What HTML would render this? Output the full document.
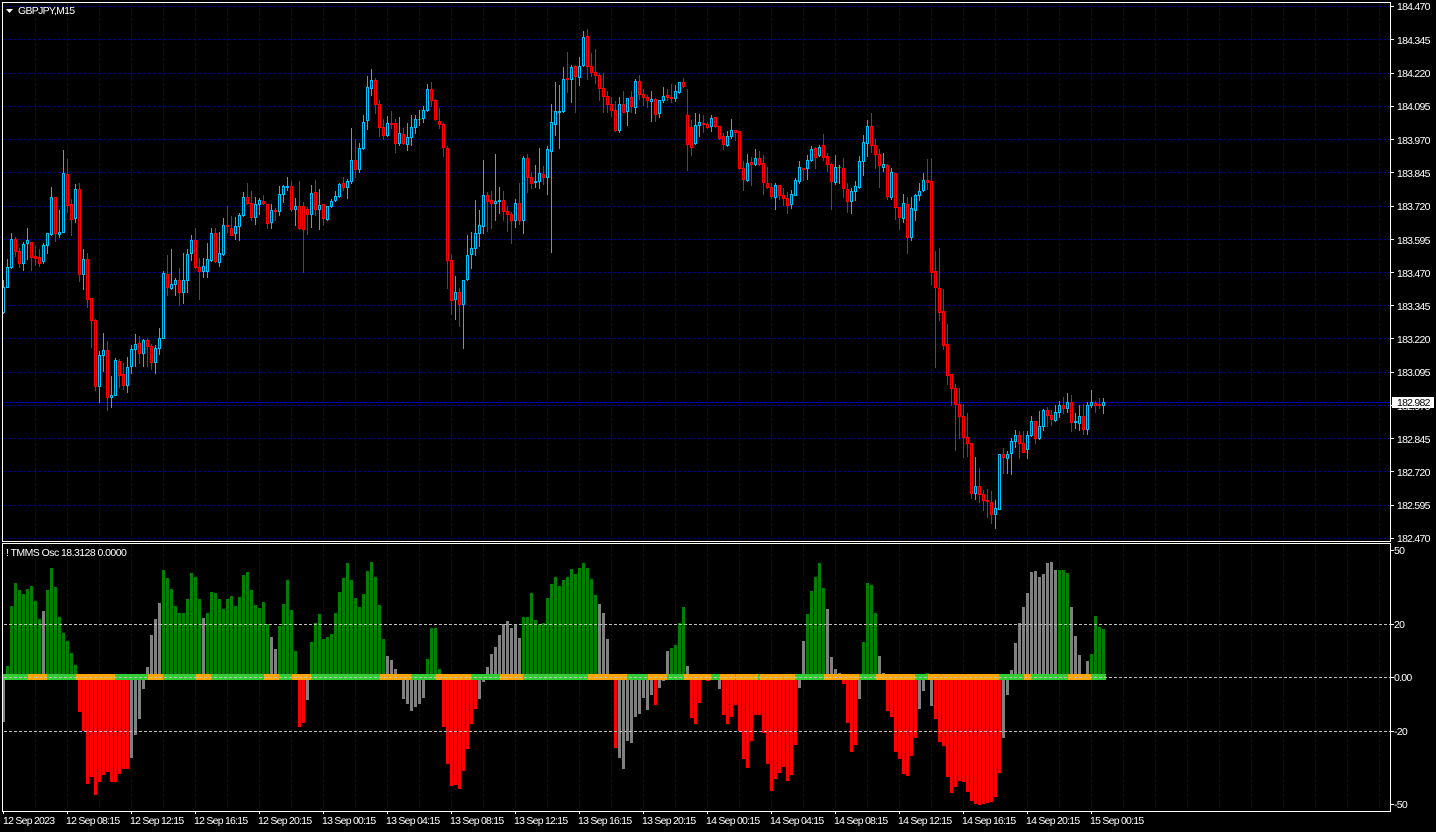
<!DOCTYPE html>
<html><head><meta charset="utf-8"><title>GBPJPY,M15</title>
<style>
html,body{margin:0;padding:0;background:#000;width:1436px;height:832px;overflow:hidden}
body{position:relative;font-family:"Liberation Sans",sans-serif;font-size:10.5px;letter-spacing:-.75px;color:#fff}
svg{position:absolute;left:0;top:0}
.t{position:absolute;white-space:nowrap;line-height:12px;height:12px}
.p{left:1397px;margin-top:1px}
.d{top:815px}
.o{left:1394px}
</style></head><body>
<svg id="s" width="1436" height="832" viewBox="0 0 1436 832" shape-rendering="crispEdges"></svg>
<div class="t" style="left:18px;top:5px;letter-spacing:-.7px">GBPJPY,M15</div>
<div class="t" style="left:6px;top:547px;letter-spacing:-.55px">! TMMS Osc 18.3128 0.0000</div>
<div class="t p" style="top:0">184.470</div><div class="t p" style="top:34px">184.345</div><div class="t p" style="top:67px">184.220</div><div class="t p" style="top:100px">184.095</div><div class="t p" style="top:134px">183.970</div><div class="t p" style="top:167px">183.845</div><div class="t p" style="top:200px">183.720</div><div class="t p" style="top:234px">183.595</div><div class="t p" style="top:267px">183.470</div><div class="t p" style="top:300px">183.345</div><div class="t p" style="top:333px">183.220</div><div class="t p" style="top:366px">183.095</div><div class="t p" style="top:400px">182.970</div><div class="t p" style="top:433px">182.845</div><div class="t p" style="top:466px">182.720</div><div class="t p" style="top:499px">182.595</div><div class="t p" style="top:532px">182.470</div>
<div class="t" style="left:1392px;top:397px;width:42px;height:11px;background:#fff"></div>
<div class="t p" style="top:396px;color:#000">182.982</div>
<div class="t o" style="top:545px">50</div><div class="t o" style="top:619px">20</div><div class="t o" style="top:672px">0.00</div><div class="t o" style="top:726px">-20</div><div class="t o" style="top:799px">-50</div>
<div class="t d" style="left:3px">12 Sep 2023</div><div class="t d" style="left:66px">12 Sep 08:15</div><div class="t d" style="left:130px">12 Sep 12:15</div><div class="t d" style="left:194px">12 Sep 16:15</div><div class="t d" style="left:258px">12 Sep 20:15</div><div class="t d" style="left:322px">13 Sep 00:15</div><div class="t d" style="left:386px">13 Sep 04:15</div><div class="t d" style="left:450px">13 Sep 08:15</div><div class="t d" style="left:514px">13 Sep 12:15</div><div class="t d" style="left:578px">13 Sep 16:15</div><div class="t d" style="left:642px">13 Sep 20:15</div><div class="t d" style="left:706px">14 Sep 00:15</div><div class="t d" style="left:770px">14 Sep 04:15</div><div class="t d" style="left:834px">14 Sep 08:15</div><div class="t d" style="left:898px">14 Sep 12:15</div><div class="t d" style="left:962px">14 Sep 16:15</div><div class="t d" style="left:1026px">14 Sep 20:15</div><div class="t d" style="left:1090px">15 Sep 00:15</div>
<script>
var A=[[60,"c682,755,660,758 c620,680,598,680 c538,621,519,623 r538,574,532,588 r574,608,564,621 c553,608,547,629 c541,550,505,597 r545,590,545,630 r587,593,556,615 r592,608,568,618 c556,602,549,608 c520,556,520,579 c412,523,381,524 r412,520,412,543 c517,521,450,531 c340,515,271,515 r343,434,297,456 r433,478,418,525 c388,473,373,486 r388,641,370,663 c598,641,568,687 r598,716,580,741 r715,781,715,861 r781,977,778,990 c886,977,874,1026 c871,886,820,933 r871,1010,844,1050 c1004,1010,949,1040 c901,1004,895,1005 r904,944,898,981 r943,974,910,987 c922,976,892,995 c868,919,856,938 c853,868,822,917 r850,880,828,910 c841,880,838,918 r841,859,835,917 r859,907,853,927 c865,907,856,938 c835,865,805,882 c640,835,632,835 r643,682,586,704 c673,685,568,686 c661,673,655,704 r661,697,625,735 c661,697,580,729 c583,661,568,696 c541,580,526,600 r541,622,505,623 r622,634,595,717 c619,634,595,650 c598,632,550,651 c520,601,505,604 r520,604,505,606 c580,607,517,619 c496,583,475,585 r496,499,439,516 r503,524,469,525 c499,520,472,538 c466,499,460,539 c412,466,397,468 r412,430,370,432 r428,472,394,480 c433,472,412,492 c421,433,415,463 r424,430,406,432 r431,490,431,504 c451,487,433,504 r451,452,445,481 c403,452,379,466 c379,403,376,427 c379,382,352,390 r379,448,364,452 c437,448,415,496 r437,505,364,507 r439,506,427,636 r446,463,440,522 c398,463,376,501 r397,446,361,465 c436,448,388,508 r431,475,431,495 c439,478,439,480 c424,439,418,441 c409,421,394,423 c373,409,370,411 r370,381,352,390 c364,382,358,414 c301,364,205,368 r301,328,238,351 c265,328,250,336 c187,265,166,266 c82,181,49,207"],
[25,"c166,188,133,209 r166,236,160,264 r238,307,226,333 r307,331,283,343 c295,331,274,334 r295,298,259,310 r295,355,283,381 c325,355,277,359 r328,355,310,358 c337,358,295,375 c307,337,271,360 c283,307,271,325 l281,281,256,299 c256,280,244,292 c193,256,178,258 r193,226,172,244 r226,283,222,285 r287,298,250,308 r298,367,295,392 r370,706,364,790 r706,826,691,867 c802,823,754,882 r802,838,790,903 c764,838,764,968 c691,763,631,765 c670,688,622,729 c625,670,526,690 c601,625,556,664 c511,604,406,624 r511,529,502,618 r526,535,499,610 c527,535,388,585 c526,527,487,565 r526,559,499,586 r559,568,544,618 r568,586,562,654 c535,586,523,606 r535,586,475,597 c400,586,394,624 r400,457,388,501 r457,475,442,490 c469,472,421,486 c445,469,370,489 r448,457,424,478 c373,457,364,507 c292,379,238,682 c259,298,172,331 c259,260,181,370 c163,259,127,261 r160,163,82,202 c127,163,121,232 r124,154,121,262 c124,155,97,180 c37,121,19,123 r34,124,13,163 r124,142,85,154 r142,151,73,175 r151,190,145,226 r190,214,145,262 r214,238,199,262 r238,256,217,274 r256,316,229,318 c238,316,217,321 r238,260,199,262 c220,259,220,300 r217,244,199,262 c169,247,163,264 r169,208,151,222 r208,217,193,240 r217,226,211,245 c223,229,199,288 r223,268,220,288 c226,265,226,276 c214,226,187,230 r211,217,193,226 r217,220,178,232 c199,220,181,228 c172,202,172,204 r172,184,160,186 r271,356,193,436 r307,367,286,390 c301,355,265,358 c292,301,268,334 r295,298,271,322 r298,307,292,310 c280,304,271,319 r277,304,277,307 r304,338,304,342 r334,358,325,372 c334,361,319,363 c316,334,283,340 r316,322,316,346 r319,428,319,431"],
[100,"r205,238,184,269 c190,241,163,244 r187,193,172,255 c175,193,148,196 r175,193,154,196 r190,247,166,282 r250,262,202,265 r262,289,250,295 c256,292,250,327 r256,286,256,296 r286,295,265,316 r295,314,277,338 c283,313,271,323 c241,284,235,286 c202,244,184,248 r205,207,205,240 c181,205,166,237 c148,181,139,184 r145,170,141,204 c142,166,136,169 r136,172,102,181 r169,193,160,214 r193,244,190,327 c202,247,166,251 l201,201,196,250 r205,265,175,292 r268,302,250,336 c274,302,265,339 c259,274,244,301 c184,262,169,265 c127,184,106,225 c79,130,61,169 r79,136,40,157 r136,163,118,205 r163,196,148,262 c193,200,160,214 r196,287,193,298 c217,290,205,296 r220,322,220,357 r322,352,322,387 c310,355,283,366 r313,412,292,460 c325,412,292,419 c286,331,283,360 c274,286,250,301 c241,271,220,274 r241,247,178,268 r244,517,175,553 r514,562,454,802 r565,637,445,661 r634,736,568,748 r733,826,673,853 r823,865,823,916 r865,913,853,1050 r913,949,865,1013 r949,1012,913,1072 r1012,1030,940,1067 r1030,1180,1030,1194 c1159,1180,1072,1198 r1159,1183,1105,1205 r1183,1201,1171,1231 r1201,1204,1168,1252 r1207,1243,1174,1270 c1225,1243,1201,1284 c1061,1226,1061,1228 r1061,1070,1045,1119 c1061,1073,1052,1120 c1024,1060,1015,1122 c1006,1024,991,1040 r1006,1030,994,1074 r1030,1055,994,1057 c1006,1048,994,1074 c964,1006,949,1008 r964,1015,964,1029 c979,1015,934,1017 c931,979,928,991 r931,946,922,979 r946,958,931,976 c937,961,916,963 c916,937,904,952 r916,925,892,940 c907,925,880,937 r907,967,886,993 c964,967,940,985 c949,970,916,991 r949,988,913,1002 c916,988,907,1002 c907,915,871,920 r910,914,904,936 r912,914,895,924 c907,916,895,939"]];
var B="s500 g333 g153 g84 g105 g117 g102 g93 g138 g192 s168 g105 g39 g96 g186 g234 g258 g294 g330 r471 r529 r687 r666 r720 r681 r660 r651 r681 r681 r657 r642 r642 s609 s540 s492 s402 s336 s240 s192 s144 g45 g69 g102 g153 g174 g174 g132 g54 g66 g132 s189 g174 g111 g114 g132 g162 g132 g123 g153 g126 g60 g51 g105 g150 g159 g141 g207 s246 s282 g213 g147 g75 g165 g288 r516 r504 s435 g261 g205 g177 g252 g246 g237 g174 g111 g69 g24 g75 g129 g156 g117 g48 g21 g66 g150 g252 s303 s315 s342 - s432 s447 s468 s456 s447 s429 g312 g219 g219 g342 r516 r627 r693 r690 r702 r648 r582 r507 r462 s432 s381 s336 s297 s276 s240 s207 s198 s219 s207 s249 g186 g186 g114 g195 g207 g204 g129 g87 g66 g93 g75 g66 g42 g57 g39 g24 g39 g72 g120 s147 s174 s252 - r579 s609 s642 s558 s564 s486 s477 s429 s465 s420 r450 s399 s378 s288 g279 g270 g204 g156 s333 r489 r507 r444 - r378 - - s402 r480 r507 r486 r450 r529 r612 r639 r558 r480 r480 r534 r627 r708 r672 r654 r636 r678 r660 r570 s399 s258 g177 g108 g66 g24 g99 s162 s306 s342 s354 r387 r504 r591 r570 s432 g261 g84 g90 g174 s303 s354 r468 r486 r591 r612 r657 r663 r603 r549 s462 s408 g354 s453 r492 r561 r573 r666 r714 r696 r678 r682 r711 r738 r747 r750 r747 r744 r741 r726 r654 s549 s420 s345 s264 s204 s156 s114 s51 s48 s66 s57 s24 s21 s45 g45 g45 g54 s156 s243 s300 - s318 g297 g183 g216 g222".split(" ");
var G=[3,28,47,76,115,148,163,196,211,264,279,292,311,380,411,436,471,500,523,588,627,648,667,684,711,720,735,736,758,760,795,824,859,876,915,928,999,1024,1031,1068,1091,1106];
var h=[],i,k,j;
function L(x1,y1,x2,y2,c,d){h.push('<line x1="'+x1+'" y1="'+y1+'" x2="'+x2+'" y2="'+y2+'" stroke="'+c+'"'+(d?' stroke-dasharray="3 2"':'')+'/>')}
/* grid */
var ys=[6,39,73,106,139,172,206,239,272,305,338,372,405,438,471,505,538];
for(i=0;i<ys.length;i++)L(3,ys[i]+.5,1390,ys[i]+.5,"#000090",1);
for(i=35;i<1390;i+=32){L(i+.5,3,i+.5,541,"#000090",1);L(i+.5,544,i+.5,811,"#000080",1)}
L(3,402.5,1390,402.5,"#0000b4");
/* candles */
var w={c:"",r:"",l:""},b={c:"",r:"",l:""},n=0,col={c:"#00bfff",r:"#ff0000",l:"#00ff00"};
for(k=0;k<A.length;k++){var o=A[k][0],t=A[k][1].split(" ");
 for(j=0;j<t.length;j++,n++){var c=t[j][0],v=t[j].slice(1).split(",").map(Number),x=3+4*n,
  T=Math.round(o+v[0]/3),Bo=Math.round(o+v[1]/3),H=Math.round(o+v[2]/3),Lo=Math.round(o+v[3]/3);
  w[c]+="M"+(x+.5)+" "+H+"V"+(Lo+1);
  b[c]+="M"+(x-.5)+" "+(T+.5)+"H"+(x+1.5)+"V"+(Bo+.5)+"H"+(x-.5)+"Z";
 }}
for(c in w)h.push('<path d="'+w[c]+'" stroke="'+col[c]+'" fill="none"/>');
for(c in b)h.push('<path d="'+b[c]+'" stroke="'+col[c]+'" fill="#000"/>');
/* histogram */
var p={g:"",s:"",r:""};
for(i=0;i<B.length;i++){if(B[i]=="-")continue;var q=B[i][0],u=+B[i].slice(1),x0=Math.max(3,2+4*i),x1=3+4*i+2,y0,y1;
 if(u<357){y0=Math.round(555+u/3);y1=674}else{y0=680;y1=Math.round(555+u/3)}
 p[q]+="M"+x0+" "+y0+"H"+x1+"V"+y1+"H"+x0+"Z"}
h.push('<path d="'+p.g+'" fill="#008000"/><path d="'+p.s+'" fill="#808080"/><path d="'+p.r+'" fill="#ff0000"/>');
/* zero band */
for(i=0;i<G.length-1;i++)h.push('<rect x="'+G[i]+'" y="674" width="'+(G[i+1]-G[i])+'" height="6" fill="'+(i%2?'#ffa500':'#32cd32')+'"/>');
L(4,624.5,1390,624.5,"#c0c0c0",1);L(4,677.5,1390,677.5,"#c0c0c0",1);L(4,731.5,1390,731.5,"#c0c0c0",1);
/* frames */
h.push('<rect x="2.5" y="2.5" width="1388" height="539" fill="none" stroke="#fff"/><rect x="2.5" y="543.5" width="1388" height="268" fill="none" stroke="#fff"/>');
/* axis ticks */
for(i=0;i<ys.length;i++)L(1390,ys[i]+.5,1394,ys[i]+.5,"#fff");
[550,624,677,731,804].forEach(function(y){L(1390,y+.5,1394,y+.5,"#fff")});
for(i=3;i<1100;i+=64)L(i+.5,811,i+.5,814,"#fff");
/* title triangle */
h.push('<path d="M6 9H13L9.5 13Z" fill="#fff" shape-rendering="auto"/>');
document.getElementById("s").innerHTML=h.join("");
</script>
</body></html>
